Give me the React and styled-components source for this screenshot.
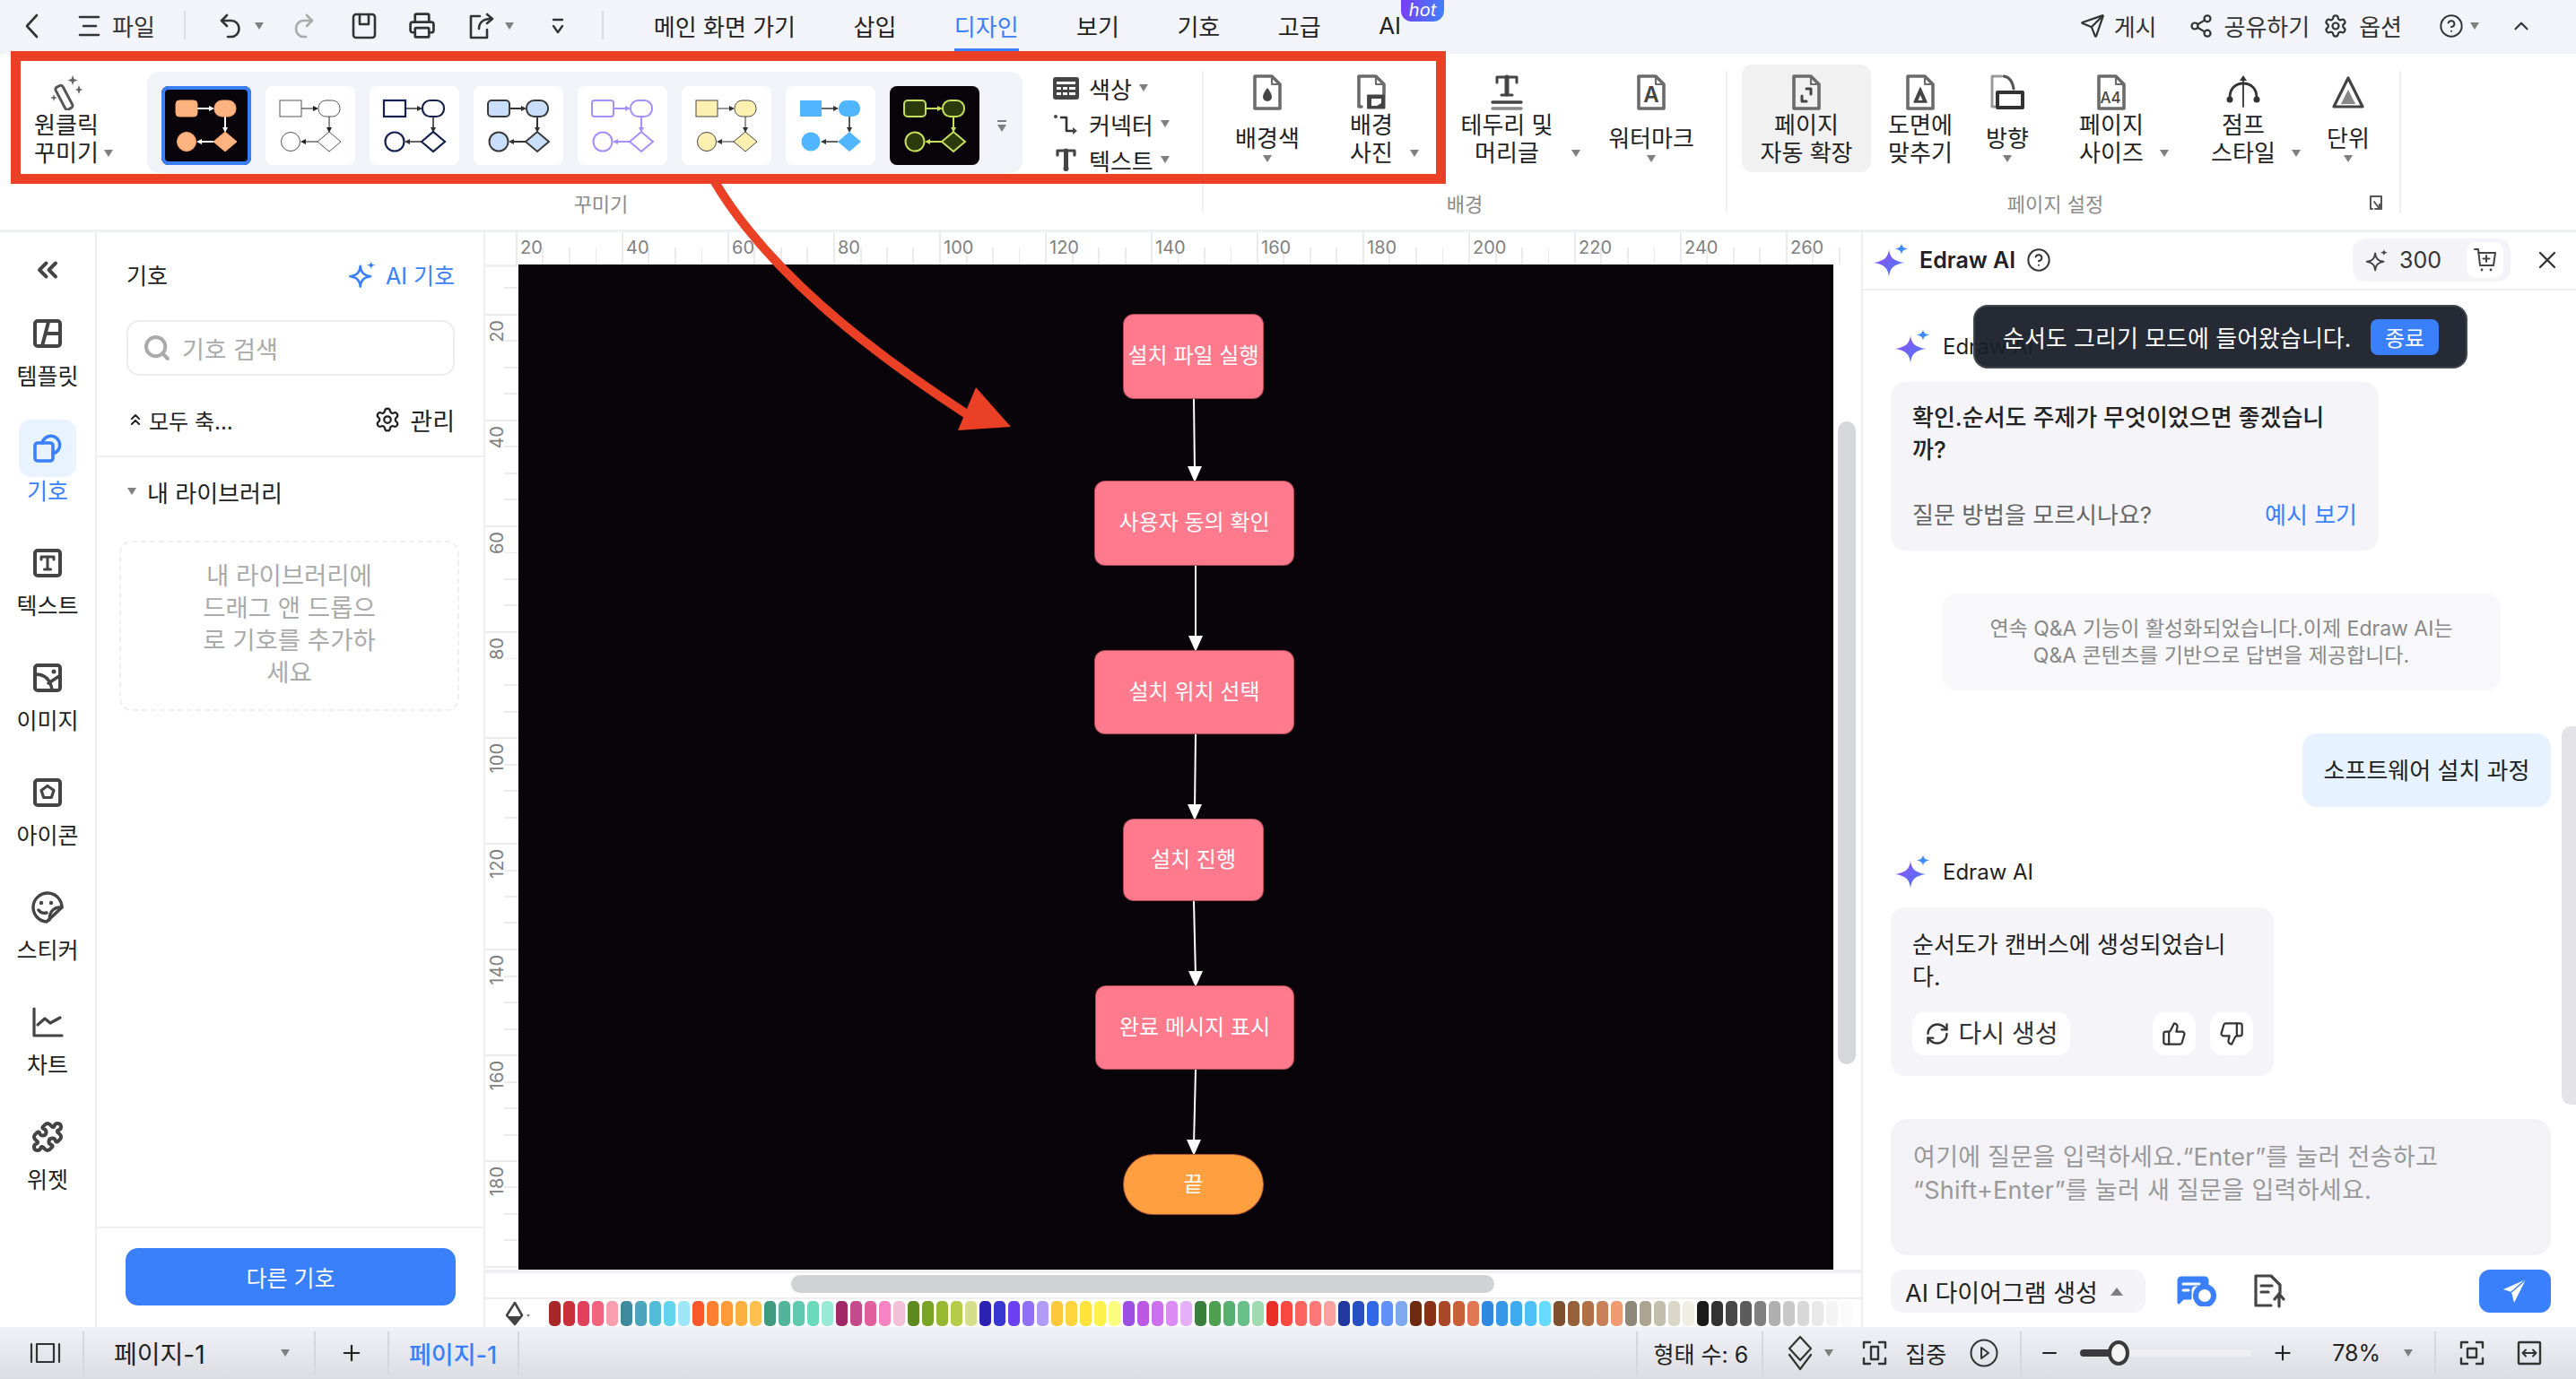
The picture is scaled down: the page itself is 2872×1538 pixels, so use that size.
import React from "react";
import styled, { createGlobalStyle } from "styled-components";
import { Printer, Send, Share2, Settings, ChevronUp, ChevronsLeft, ChevronsUp, CircleHelp, Plus, Minus, X, Search, ThumbsUp, ThumbsDown, RefreshCw, Puzzle } from "lucide-react";

const BLUE = "#3a7ffb";

const Global = createGlobalStyle`
  * { box-sizing: border-box; }
  html, body { margin: 0; padding: 0; width: 100%; height: 100%; overflow: hidden; background: #fff; }
  body { font-family: Inter, "Noto Sans CJK KR", sans-serif; color: #222; font-size: 26px; }
`;

const Page = styled.div`
  position: relative; width: 2872px; height: 1538px; overflow: hidden;
  display: grid; grid-template-rows: 60px 199px 1221px 58px;
`;

/* ---------- title bar ---------- */
const TitleBar = styled.header`
  display: flex; align-items: flex-start; background: #f2f4f9; height: 60px;
`;
const BarItem = styled.div`
  display: flex; align-items: center; height: 57px; margin-left: ${p => p.$ml || 0}px; flex: none;
  color: #333; white-space: nowrap;
`;
const BarSep = styled.div`
  flex: none; width: 2px; height: 32px; margin-top: 12px; margin-left: ${p => p.$ml || 0}px; background: #dcdde3;
`;
const Tabs = styled.nav`
  display: flex; gap: 64.5px; margin-left: 56px;
`;
const Tab = styled.div`
  position: relative; display: flex; align-items: center; height: 57px; white-space: nowrap;
  color: ${p => p.$on ? BLUE : "#222"}; border-bottom: 3px solid ${p => p.$on ? BLUE : "transparent"}; padding-top: 3px;
`;
const HotBadge = styled.span`
  position: absolute; left: 100%; top: 0; width: 48px; height: 24px; border-radius: 0 0 12px 12px;
  background: linear-gradient(100deg, #7a3cf5, #3f84fb); color: #fff; font-size: 20px; line-height: 22px; text-align: center; font-style: italic;
`;
const BarRight = styled.div`
  display: flex; margin-left: auto; padding-right: 48px;
`;
const Caret = styled.i`
  display: block; flex: none; width: 0; height: 0;
  border-left: 5px solid transparent; border-right: 5px solid transparent;
  border-top: 8px solid ${p => p.$c || "#7f7f7f"};
  margin-left: ${p => p.$ml || 0}px;
`;

/* ---------- ribbon ---------- */
const Ribbon = styled.section`
  display: flex; background: #fff; border-bottom: 3px solid #eff0f3; height: 199px;
`;
const Group = styled.div`
  flex: none; width: ${p => p.$w}px; display: flex; flex-direction: column; height: 196px;
`;
const ToolRow = styled.div`
  display: flex; height: 150px; padding-top: 12px; padding-left: ${p => p.$pl || 0}px;
`;
const GroupLabel = styled.div`
  display: grid; grid-template-columns: 1fr auto 1fr; align-items: center; height: 30px;
  font-size: 22px; color: #8b8b8b; padding-right: 18px;
  & > span { grid-column: 2; padding-left: ${p => p.$shift || 0}px; }
  & > svg { grid-column: 3; justify-self: end; }
`;
const Sep = styled.div`
  flex: none; width: 2px; height: 159px; margin-top: 19px; background: #f0f0f3;
`;
const Tool = styled.div`
  flex: none; width: ${p => p.$w}px; height: 120px; display: flex; flex-direction: column; align-items: center;
  padding-top: 12px; border-radius: 12px; background: ${p => p.$on ? "#f1f1f1" : "transparent"};
`;
const ToolIcon = styled.div`
  height: 38px; display: flex; align-items: center; justify-content: center;
`;
const ToolText = styled.div`
  height: 60px; margin-top: 3px; padding-top: ${p => p.$single ? 14 : 0}px; display: flex; flex-direction: column;
  align-items: center; justify-content: ${p => p.$single ? "flex-start" : "center"}; font-size: 26px; line-height: 31px;
`;
const ToolLine = styled.div`
  display: flex; align-items: center; justify-content: center; white-space: nowrap;
`;
const SideCaret = styled(Caret)`
  margin-left: ${p => p.$gap}px; margin-right: ${p => -(p.$gap + 10)}px;
`;
const UnderCaret = styled(Caret)`
  margin-top: 3px;
`;
const Gallery = styled.div`
  flex: none; width: 976px; height: 113px; margin: 8px 0 0 16px; padding: 16px 0 0 16px;
  display: flex; gap: 16px; background: #f2f3f8; border-radius: 14px;
`;
const Thumb = styled.div`
  flex: none; width: 100px; height: 88px; border-radius: 8px; overflow: hidden;
  background: ${p => p.$bg};
  outline: ${p => p.$sel ? `4px solid ${BLUE}` : "none"}; outline-offset: -4px;
  svg { display: block; }
`;
const GalleryMore = styled.div`
  flex: none; display: flex; flex-direction: column; align-items: center; gap: 3px; margin: 38px 0 0 4px;
  & > b { display: block; width: 10px; height: 2px; background: #7f7f7f; }
`;
const StyleList = styled.div`
  flex: none; display: flex; flex-direction: column; margin: 6px 0 0 34px;
`;
const StyleRow = styled.div`
  display: flex; align-items: center; height: 40px; white-space: nowrap;
  & > svg { flex: none; margin-right: 11px; }
  & > ${Caret} { margin-left: 8px; }
`;

/* ---------- main area ---------- */
const Main = styled.main`
  display: flex; height: 1221px; min-height: 0;
`;
const Rail = styled.aside`
  flex: none; width: 108px; border-right: 2px solid #efeff1; display: flex; flex-direction: column; align-items: center; padding-top: 30px;
`;
const Collapse = styled.div`
  height: 23px; margin-bottom: 28px; display: flex; align-items: center; justify-content: center; color: #444;
`;
const RailItem = styled.div`
  width: 100%; height: 128px; display: flex; flex-direction: column; align-items: center;
  color: ${p => p.$on ? BLUE : "#222"};
`;
const RailIcon = styled.div`
  width: 64px; height: 64px; border-radius: 14px; display: flex; align-items: center; justify-content: center;
  background: ${p => p.$on ? "#e9f3ff" : "transparent"};
`;
const RailLabel = styled.div`
  margin-top: 2px; font-size: 25px; line-height: 28px; white-space: nowrap;
`;

const Panel = styled.section`
  flex: none; width: 433px; border-right: 2px solid #efeff1; display: flex; flex-direction: column;
`;
const PanelTop = styled.div`
  padding: 29px 32px 22px 33px; border-bottom: 2px solid #f0f0f2;
`;
const SpreadRow = styled.div`
  display: flex; align-items: center; justify-content: space-between; height: 36px; margin-top: ${p => p.$mt || 0}px; white-space: nowrap;
  font-size: 25px;
`;
const AiLink = styled.div`
  display: flex; align-items: center; gap: 10px; color: ${BLUE};
`;
const InlineIcon = styled.div`
  display: flex; align-items: center; gap: ${p => p.$gap || 10}px; font-size: ${p => p.$fs || 25}px;
`;
const SearchBox = styled.div`
  display: flex; align-items: center; gap: 12px; height: 62px; margin-top: 33px; padding-left: 16px;
  border: 2px solid #ececee; border-radius: 14px; color: #aaa; font-size: 27px;
`;
const LibraryRow = styled.div`
  display: flex; align-items: center; height: 36px; margin: 20px 0 0 34px; gap: 12px; font-size: 26px; white-space: nowrap;
`;
const DropZone = styled.div`
  width: 379px; height: 190px; margin: 37px 0 0 25px; border: 2px dashed #efeff1; border-radius: 14px;
  display: flex; align-items: center; justify-content: center; text-align: center;
  color: #aaa; font-size: 27.5px; line-height: 36px; padding-bottom: 4px;
`;
const PanelFoot = styled.div`
  margin-top: auto; border-top: 2px solid #f0f0f2; padding: 22px 31px 24px 32px;
`;
const MoreBtn = styled.div`
  height: 64px; border-radius: 14px; background: ${BLUE}; color: #fff; font-size: 25px;
  display: flex; align-items: center; justify-content: center;
`;

const CanvasArea = styled.section`
  flex: none; width: 1534px; display: flex; flex-direction: column; overflow: hidden;
`;
const HRuler = styled.div`
  flex: none; height: 36px; display: flex; padding-left: 34px; background: #fff; overflow: hidden;
`;
const HCell = styled.div`
  flex: none; width: 118px; height: 36px; border-left: 2px solid #ebebed; padding: 0 0 0 3px;
  font-size: 20px; line-height: 34px; color: #808080;
  background: repeating-linear-gradient(90deg, transparent 0 27.5px, #ebebed 27.5px 29.5px) left bottom / 100% 19px no-repeat;
`;
const CanvasBody = styled.div`
  flex: none; height: 1121px; display: flex;
`;
const VRuler = styled.div`
  flex: none; width: 37px; display: flex; flex-direction: column; overflow: hidden; background: #fff; border-top: 3px solid #f0f0f2;
`;
const VCell = styled.div`
  flex: none; height: ${p => p.$h || 118}px; border-top: ${p => p.$h ? 0 : 2}px solid #ebebed; padding: 5px 0 0 3px;
  font-size: 20px; color: #808080;
  background: repeating-linear-gradient(0deg, transparent 0 27.5px, #ebebed 27.5px 29.5px) right top / 16px 100% no-repeat;
  & > span { display: block; writing-mode: vertical-rl; transform: rotate(180deg); line-height: 20px; }
`;
const Stage = styled.div`
  position: relative; flex: none; width: 1466px; background: #09030a; overflow: hidden;
`;
const Wires = styled.svg`
  position: absolute; inset: 0; width: 100%; height: 100%;
`;
const Node = styled.div`
  position: absolute; left: ${p => p.$x - 578}px; top: ${p => p.$y - 295}px; width: ${p => p.$w}px; height: ${p => p.$h}px;
  border-radius: ${p => p.$r}px; background: ${p => p.$bg}; border: 1px solid rgba(120,40,50,.6);
  display: flex; align-items: center; justify-content: center; color: #fff; font-size: 24px; padding-bottom: 6px; white-space: nowrap;
`;
const Gutter = styled.div`
  flex: 1; padding: 175px 0 0 5px;
`;
const VThumb = styled.div`
  width: 20px; height: 717px; border-radius: 10px; background: #d6d7da;
`;
const HScroll = styled.div`
  flex: none; height: 31px; border-top: 4px solid #f0f0f2; padding: 2px 0 0 341px;
`;
const HThumb = styled.div`
  width: 784px; height: 20px; border-radius: 10px; background: #d1d2d4;
`;
const Swatches = styled.div`
  flex: none; height: 33px; border-top: 2px solid #eee; display: flex; align-items: center; padding-left: 22px;
`;
const ChipRow = styled.div`
  display: flex; gap: 3px; margin-left: 17px;
`;
const Chip = styled.i`
  display: block; flex: none; width: 13px; height: 28px; border-radius: 5px; background: ${p => p.$c};
`;

/* ---------- chat ---------- */
const Chat = styled.aside`
  position: relative; flex: none; width: 797px; border-left: 2px solid #efeff1; display: flex; flex-direction: column;
`;
const ChatHead = styled.div`
  flex: none; height: 65px; padding: 0 16px 2px 12px; border-bottom: 2px solid #efeff1; display: flex; align-items: center;
`;
const ChatTitle = styled.div`
  margin: 0 12px 0 13px; font-size: 25px; font-weight: 600; white-space: nowrap;
`;
const Credits = styled.div`
  margin-left: auto; width: 176px; height: 48px; border-radius: 14px; background: #f3f3f8; display: flex; align-items: center; padding: 0 8px 0 14px;
  font-size: 25px; color: #333;
`;
const CreditNum = styled.span`
  margin-left: 12px;
`;
const CartBox = styled.div`
  margin-left: auto; width: 41px; height: 40px; background: #fff; border-radius: 10px; display: flex; align-items: center; justify-content: center;
`;
const CloseBox = styled.div`
  margin-left: 25px; display: flex; color: #333;
`;
const ChatBody = styled.div`
  flex: 1; display: flex; flex-direction: column; padding: 0 28px 0 31px; min-height: 0;
`;
const AgentRow = styled.div`
  flex: none; display: flex; align-items: center; gap: 15px; height: 38px; margin: ${p => p.$mt}px 0 0 5px; font-size: 24px; white-space: nowrap;
`;
const Bubble = styled.div`
  flex: none; width: ${p => p.$w}px; height: 188px; margin-top: 21px; padding: ${p => p.$strong ? 22 : 24}px 24px 0; border-radius: 16px; background: #f4f4f9;
  font-size: 26px; line-height: 36px; font-weight: ${p => p.$strong ? 500 : 400};
`;
const Hint = styled.div`
  display: flex; justify-content: space-between; margin-top: 37px; color: #666; font-size: 26px; line-height: 36px; font-weight: 400;
  & > b { font-weight: 400; color: ${BLUE}; }
`;
const Notice = styled.div`
  flex: none; width: 623px; height: 108px; margin: 48px 0 0 57px; border-radius: 16px; background: #f8f8fb; color: #888;
  font-size: 23px; line-height: 30px; text-align: center; padding-top: 24px; white-space: nowrap;
`;
const UserBubble = styled.div`
  flex: none; align-self: flex-end; width: 277px; height: 82px; margin-top: 48px; border-radius: 16px; background: #e6f2ff;
  display: flex; align-items: center; justify-content: center; font-size: 26px; white-space: nowrap; padding-bottom: 4px;
`;
const ActionRow = styled.div`
  display: flex; gap: 16px; margin-top: 21px;
`;
const Action = styled.div`
  flex: none; height: 48px; width: ${p => p.$w}px; border-radius: 14px; background: #fff; display: flex; align-items: center; justify-content: center; gap: 10px;
  margin-left: ${p => p.$ml || 0}px; color: #333; white-space: nowrap; font-size: 28px;
`;
const Prompt = styled.div`
  flex: none; height: 152px; margin-top: 48px; padding: 24px 25px; border-radius: 18px; background: #f2f2f7; color: #999; font-size: 27px; line-height: 37px;
  white-space: nowrap; letter-spacing: .3px;
`;
const PromptBar = styled.div`
  flex: none; display: flex; align-items: center; height: 48px; margin-top: 16px;
`;
const ModeSelect = styled.div`
  flex: none; width: 284px; height: 48px; border-radius: 14px; background: #f3f3f8; display: flex; align-items: center; padding-left: 16px; gap: 14px;
  font-size: 27px; white-space: nowrap;
`;
const UpCaret = styled.i`
  display: block; flex: none; width: 0; height: 0; border-left: 7px solid transparent; border-right: 7px solid transparent; border-bottom: 9px solid #7f7f7f;
`;
const SendBtn = styled.div`
  margin-left: auto; width: 80px; height: 48px; border-radius: 12px; background: ${BLUE}; display: flex; align-items: center; justify-content: center;
`;
const PromptIcon = styled.div`
  display: flex; margin-left: ${p => p.$ml}px;
`;
const ChatScroll = styled.div`
  position: absolute; left: 779px; top: 551px; width: 16px; height: 422px; border-radius: 10px 0 0 10px; background: #e3e3e8;
`;
const Toast = styled.div`
  position: absolute; left: 123px; top: 81px; width: 551px; height: 71px; padding: 0 30px 0 31px; border-radius: 16px; background: rgba(26,31,42,.95); border: 2px solid #43474f;
  color: #fff; display: flex; align-items: center; justify-content: space-between; white-space: nowrap; font-size: 26px;
`;
const ToastBtn = styled.div`
  width: 76px; height: 40px; border-radius: 8px; background: ${BLUE}; display: flex; align-items: center; justify-content: center; font-size: 24px;
`;

/* ---------- status bar ---------- */
const StatusBar = styled.footer`
  display: flex; align-items: center; height: 58px; padding-right: 38px; background: linear-gradient(180deg, #f1f2f7, #dcdde2);
`;
const StatusSep = styled.div`
  flex: none; width: 2px; height: 48px; background: #d6d7dc; margin-left: ${p => p.$ml || 0}px;
`;
const StatusCell = styled.div`
  flex: none; display: flex; align-items: center; width: ${p => p.$w ? p.$w + "px" : "auto"}; margin-left: ${p => p.$ml || 0}px; padding-left: ${p => p.$pl || 0}px;
  justify-content: ${p => p.$center ? "center" : "flex-start"};
  color: ${p => p.$c || "#222"}; font-weight: ${p => p.$bold ? 500 : 400}; white-space: nowrap; font-size: ${p => p.$fs || 25}px;
`;
const StatusFill = styled.div`flex: 1;`;
const SliderTrack = styled.div`
  position: relative; flex: none; width: 191px; height: 8px; margin-left: 22px; border-radius: 4px; background: #eeeef0;
`;
const SliderFill = styled.div`
  height: 8px; width: 42px; border-radius: 4px; background: #3a3a3a;
`;
const SliderKnob = styled.div`
  position: absolute; left: 31px; top: -10px; width: 24px; height: 28px; border-radius: 50%; background: #f5f5f5; border: 4px solid #3a3a3a;
`;

/* ---------- annotation overlays ---------- */
const RedFrame = styled.div`
  position: absolute; left: 12px; top: 57px; width: 1600px; height: 148px; border: 11px solid #ea4025; pointer-events: none;
`;
const RedArrow = styled.svg`
  position: absolute; left: 0; top: 0; width: 2872px; height: 1538px; pointer-events: none;
`;

/* ---------- drawings ---------- */
const Ic = ({ w, h, children, sw = 2.6, c = "#333", vb }) => (
  <svg width={w} height={h} viewBox={vb || `0 0 ${w} ${h}`} fill="none" stroke={c} strokeWidth={sw} strokeLinecap="round" strokeLinejoin="round">{children}</svg>
);

const Star = ({ id }) => (
  <svg width="38" height="38" viewBox="0 0 38 38">
    <defs><linearGradient id={id} x1="0" y1="0" x2="1" y2="1"><stop offset="0" stopColor="#9a4bf0" /><stop offset="1" stopColor="#3f7efb" /></linearGradient></defs>
    <path d="M17 7 C18 16 22 20 34 22 C22 24 18 28 17 38 C16 28 12 24 0 22 C12 20 16 16 17 7Z" fill={`url(#${id})`} />
    <path d="M31 0 C31.5 4 33 5.5 38 6.5 C33 7.5 31.5 9 31 13 C30.5 9 29 7.5 24 6.5 C29 5.5 30.5 4 31 0Z" fill="#3f8bfb" />
  </svg>
);

const Spark = ({ c = "#333", s = 28 }) => (
  <svg width={s} height={s} viewBox="0 0 28 28" fill="none" stroke={c} strokeWidth="2.2" strokeLinejoin="round">
    <path d="M12 6 C12.6 12 15 15 22 16 C15 17 12.6 20 12 26 C11.4 20 9 17 2 16 C9 15 11.4 12 12 6Z" />
    <path d="M22.5 1 C22.8 3.6 23.8 4.6 27 5 C23.8 5.4 22.8 6.4 22.5 9 C22.2 6.4 21.2 5.4 18 5 C21.2 4.6 22.2 3.6 22.5 1Z" fill={c} stroke="none" />
  </svg>
);

const Doc = ({ children, sw = 3.6, partial }) => (
  <svg width="34" height="40" viewBox="0 0 34 40" fill="none" stroke="#6b6b6b" strokeWidth={sw} strokeLinejoin="round" strokeLinecap="round">
    <path d={partial ? "M6 36H3V2h19l9 9v11" : "M3 2h19l9 9v27H3z"} />
    <path d="M22 2v9h9" strokeWidth="2.2" />
    {children}
  </svg>
);

const THEMES = [
  { bg: "#09030a", fill: "#ffb380", stroke: "#ffa566", sw: 1, line: "#fff", lw: 2, r: 4, sel: true },
  { bg: "#fff", fill: "#fff", stroke: "#555", sw: 1, line: "#222", lw: 1, r: 0 },
  { bg: "#fff", fill: "#fff", stroke: "#14204f", sw: 2.2, line: "#333", lw: 1.6, r: 0 },
  { bg: "#fff", fill: "#c9defb", stroke: "#3a3a3a", sw: 2, line: "#333", lw: 2, r: 4 },
  { bg: "#fff", fill: "#fff", stroke: "#a48ffb", sw: 2, line: "#a48ffb", lw: 2, r: 3 },
  { bg: "#fff", fill: "#fef0b0", stroke: "#444", sw: 1, line: "#333", lw: 1, r: 0 },
  { bg: "#fff", fill: "#4fb6ff", stroke: "#4fb6ff", sw: 0, line: "#333", lw: 1.6, r: 0 },
  { bg: "#09030a", fill: "#2c3a0c", stroke: "#c6e05e", sw: 2, line: "#c6e05e", lw: 2, r: 4 },
];

const StyleThumb = ({ t }) => {
  const s = { fill: t.fill, stroke: t.stroke, strokeWidth: t.sw };
  return (
    <Thumb $bg={t.bg} $sel={t.sel}>
      <svg width="100" height="88" viewBox="0 0 100 88">
        <path d="M40 25 H54" stroke={t.line} strokeWidth={t.lw} />
        <path d="M59 25 l-6 -3 v6z" fill={t.line} />
        <path d="M71 34 V47" stroke={t.line} strokeWidth={t.lw} />
        <path d="M71 52 l-3 -6 h6z" fill={t.line} />
        <path d="M58 62 H44" stroke={t.line} strokeWidth={t.lw} />
        <path d="M39 62 l6 -3 v6z" fill={t.line} />
        <rect x="16" y="16" width="24" height="18" rx={t.r} {...s} />
        <rect x="59" y="16" width="24" height="18" rx="8.5" {...s} />
        <ellipse cx="28" cy="62" rx="10.5" ry="10.5" {...s} />
        <path d="M58 62 L71 51 L84 62 L71 73Z" {...s} />
      </svg>
    </Thumb>
  );
};

const PALETTE = [
  "#a82828","#c8303c","#e0405a","#f2647e","#fb9eb0","#3d8a9e","#4ba6bd","#55bcd8","#62d4ee","#9ce8f8",
  "#f9582a","#ff8030","#ff9a38","#ffae40","#ffc050","#3f9a80","#52b49a","#60c8ae","#6cd8bc","#96ead6",
  "#a02868","#c44a8e","#e0609e","#f684c4","#f2c0d8","#5e8a20","#78a428","#96b832","#b4cc48","#d4de88",
  "#2a22b0","#3838d0","#6a40f0","#9070f4","#b09cf8","#ffc83c","#ffd43c","#ffe23c","#fff24c","#fcfc80",
  "#9a50e0","#bc58e4","#cc70f0","#dc8cf4","#e4b0f8","#38803c","#4ea050","#58b070","#68c088","#a0dcb0",
  "#e83028","#f84840","#fc6460","#ff7878","#fca0a0","#2038a0","#2850c0","#3068e8","#6090f8","#80a8f0",
  "#6e2a10","#883018","#a84828","#c86038","#e07858","#3088e0","#3898e8","#40aaf0","#50c0f8","#68dcff",
  "#7c5030","#96603c","#b07048","#c88058","#f09a70","#908878","#aca490","#c4beac","#dcd6c8","#f0ede2",
  "#1a1a1a","#333333","#484848","#5c5c5c","#808080","#b0b0b0","#c8c8c8","#d8d8d8","#e8e8e8","#f4f4f4","#fafafa",
];

const NODES = [
  { t: "설치 파일 실행", x: 1252, y: 350, w: 157, h: 95, r: 12, bg: "#ff7a8c" },
  { t: "사용자 동의 확인", x: 1220, y: 536, w: 223, h: 95, r: 12, bg: "#ff7a8c" },
  { t: "설치 위치 선택", x: 1220, y: 725, w: 223, h: 94, r: 12, bg: "#ff7a8c" },
  { t: "설치 진행", x: 1252, y: 913, w: 157, h: 92, r: 12, bg: "#ff7a8c" },
  { t: "완료 메시지 표시", x: 1221, y: 1099, w: 222, h: 94, r: 12, bg: "#ff7a8c" },
  { t: "끝", x: 1252, y: 1287, w: 157, h: 68, r: 34, bg: "#ff9f40" },
];
const WIRES = [[1331, 445, 1332, 536], [1333, 631, 1333, 725], [1333, 819, 1332, 913], [1331, 1005, 1333, 1099], [1333, 1193, 1331, 1287]];

const TOOLS_DESIGN = [
  { k: "색상", icon: <Ic w={29} h={25} sw={0}><rect width="29" height="25" rx="3" fill="#444" stroke="none" /><path d="M4 5h21v3H4zM4 11h5v3H4zM11 11h5v3h-5zM18 11h7v3h-7zM4 17h5v3H4zM11 17h5v3h-5zM18 17h7v3h-7z" fill="#fff" stroke="none" /></Ic> },
  { k: "커넥터", icon: <Ic w={29} h={25} sw={2.6}><circle cx="3" cy="4" r="2" fill="#444" stroke="none" /><path d="M9 5h6v15h6" /><path d="M22 16l5 4-5 4z" fill="#444" stroke="none" /></Ic> },
  { k: "텍스트", icon: <Ic w={29} h={28} sw={3.2} c="#444"><path d="M5 9V4h19v5" /><path d="M14.500 4v20" strokeWidth="5" /><circle cx="14.500" cy="24" r="3" fill="#444" stroke="none" /></Ic> },
];

const App = () => (
  <Page>
    <Global />
    <TitleBar>
      <BarItem $ml={27}><Ic w={17} h={28}><path d="M14 2 3 14l11 12" /></Ic></BarItem>
      <BarItem $ml={43}><Ic w={25} h={26}><path d="M2 3h21M6 13h14M2 23h21" /></Ic></BarItem>
      <BarItem $ml={13}>파일</BarItem>
      <BarSep $ml={32} />
      <BarItem $ml={38}><Ic w={24} h={30}><path d="M8 3 2 9l6 6" /><path d="M2 9h11a8.500 9 0 0 1 0 18H9" /></Ic><Caret $ml={15} /></BarItem>
      <BarItem $ml={34}><Ic w={22} h={30} c="#aaa"><path d="M14 3l6 6-6 6" /><path d="M20 9H10a8 9 0 0 0 0 18h3" /></Ic></BarItem>
      <BarItem $ml={42}><Ic w={28} h={30}><rect x="2" y="2" width="24" height="26" rx="3" /><path d="M9 2v11h10V2" /></Ic></BarItem>
      <BarItem $ml={35}><Printer size={31} strokeWidth={2.1} color="#333" /></BarItem>
      <BarItem $ml={36}><Ic w={30} h={30}><path d="M13 4H3v24h18v-9" /><path d="M12 18c0-7 5-11 13-11" /><path d="M21 2l6 5-6 5" /></Ic><Caret $ml={11} /></BarItem>
      <BarItem $ml={42}><Ic w={14} h={20} sw={2.4}><path d="M2 3h10" /><path d="M2 10l5 7 5-7" /></Ic></BarItem>
      <BarSep $ml={42} />
      <Tabs>
        <Tab>메인 화면 가기</Tab>
        <Tab>삽입</Tab>
        <Tab $on>디자인</Tab>
        <Tab>보기</Tab>
        <Tab>기호</Tab>
        <Tab>고급</Tab>
        <Tab>AI<HotBadge>hot</HotBadge></Tab>
      </Tabs>
      <BarRight>
        <BarItem><Send size={28} strokeWidth={1.9} color="#333" /></BarItem>
        <BarItem $ml={10}>게시</BarItem>
        <BarItem $ml={36}><Share2 size={28} strokeWidth={1.9} color="#333" /></BarItem>
        <BarItem $ml={11}>공유하기</BarItem>
        <BarItem $ml={15}><Settings size={28} strokeWidth={1.9} color="#333" /></BarItem>
        <BarItem $ml={12}>옵션</BarItem>
        <BarItem $ml={41}><CircleHelp size={28} strokeWidth={1.7} color="#333" /><Caret $ml={7} /></BarItem>
        <BarItem $ml={34}><ChevronUp size={26} strokeWidth={2} color="#333" /></BarItem>
      </BarRight>
    </TitleBar>

    <Ribbon>
      <Group $w={1340}>
        <ToolRow>
          <Tool $w={148}>
            <ToolIcon>
              <Ic w={36} h={40} sw={3} c="#555">
                <rect x="11" y="12" width="9" height="28" rx="3" transform="rotate(-28 15 26)" />
                <path d="M25 1l1.500 4 4 1.500-4 1.500-1.500 4-1.500-4-4-1.500 4-1.500zM32 12l1.500 4 3 1-3 1-1.500 4-1.500-4-3-1 3-1zM4 22l1 3 3 1-3 1-1 3-1-3-3-1 3-1z" fill="#666" stroke="none" />
              </Ic>
            </ToolIcon>
            <ToolText>
              <ToolLine>원클릭</ToolLine>
              <ToolLine>꾸미기<SideCaret $gap={6} /></ToolLine>
            </ToolText>
          </Tool>
          <Gallery>
            {THEMES.map((t, i) => <StyleThumb key={i} t={t} />)}
            <GalleryMore><b /><Caret /></GalleryMore>
          </Gallery>
          <StyleList>
            {TOOLS_DESIGN.map(d => <StyleRow key={d.k}>{d.icon}{d.k}<Caret /></StyleRow>)}
          </StyleList>
        </ToolRow>
        <GroupLabel $shift={18}><span>꾸미기</span></GroupLabel>
      </Group>
      <Sep />
      <Group $w={582}>
        <ToolRow>
          <Tool $w={142}>
            <ToolIcon><Doc><path d="M17 15c3 4 5 7 5 10a5 5 0 0 1-10 0c0-3 2-6 5-10z" fill="#444" stroke="none" /></Doc></ToolIcon>
            <ToolText $single><ToolLine>배경색</ToolLine><UnderCaret /></ToolText>
          </Tool>
          <Tool $w={90}>
            <ToolIcon><Doc partial><path d="M13 23h19v15H13z" fill="#444" stroke="#444" strokeWidth="1" /><path d="M17 27h11v5l-5 3h-6z" fill="#fff" stroke="none" /></Doc></ToolIcon>
            <ToolText><ToolLine>배경</ToolLine><ToolLine>사진<SideCaret $gap={19} /></ToolLine></ToolText>
          </Tool>
          <Tool $w={212}>
            <ToolIcon>
              <Ic w={36} h={40} sw={3} c="#444"><path d="M7 9V3h22v6" /><path d="M18 3v19" strokeWidth="5" /><path d="M12 23h12" /><path d="M2 31h32" strokeWidth="3.4" /><path d="M2 38h32" strokeWidth="3.4" stroke="#888" /></Ic>
            </ToolIcon>
            <ToolText><ToolLine>테두리 및</ToolLine><ToolLine>머리글<SideCaret $gap={36} /></ToolLine></ToolText>
          </Tool>
          <Tool $w={110}>
            <ToolIcon><Doc><text x="17" y="31" textAnchor="middle" fontSize="24" fontFamily="Inter" fill="#444" stroke="none" fontWeight="600">A</text></Doc></ToolIcon>
            <ToolText $single><ToolLine>워터마크</ToolLine><UnderCaret /></ToolText>
          </Tool>
        </ToolRow>
        <GroupLabel $shift={18}><span>배경</span></GroupLabel>
      </Group>
      <Sep />
      <Group $w={749}>
        <ToolRow $pl={16}>
          <Tool $w={144} $on>
            <ToolIcon><Doc><path d="M17 16h5v6M12 24v6h5" strokeWidth="3" stroke="#444" /></Doc></ToolIcon>
            <ToolText><ToolLine>페이지</ToolLine><ToolLine>자동 확장</ToolLine></ToolText>
          </Tool>
          <Tool $w={110}>
            <ToolIcon><Doc><path d="M17 15l7 16H10z" fill="#444" stroke="#444" strokeWidth="1.500" /><path d="M17 23l2.500 6h-5z" fill="#fff" stroke="none" /></Doc></ToolIcon>
            <ToolText><ToolLine>도면에</ToolLine><ToolLine>맞추기</ToolLine></ToolText>
          </Tool>
          <Tool $w={84}>
            <ToolIcon>
              <Ic w={40} h={40} sw={3} c="#555"><path d="M6 36H3V2h10" stroke="#999" /><path d="M16 2c6 1 10 6 11 14" /><rect x="9" y="20" width="28" height="17" fill="#fff" stroke="#333" strokeWidth="4" /></Ic>
            </ToolIcon>
            <ToolText $single><ToolLine>방향</ToolLine><UnderCaret /></ToolText>
          </Tool>
          <Tool $w={148}>
            <ToolIcon><Doc><text x="16" y="32" textAnchor="middle" fontSize="17" fontFamily="Inter" fill="#444" stroke="none" fontWeight="500">A4</text></Doc></ToolIcon>
            <ToolText><ToolLine>페이지</ToolLine><ToolLine>사이즈<SideCaret $gap={18} /></ToolLine></ToolText>
          </Tool>
          <Tool $w={146}>
            <ToolIcon>
              <Ic w={42} h={40} sw={2.8} c="#333"><path d="M6 26c0-10 6-16 15-16s15 6 15 16" /><path d="M21 3v33" strokeWidth="1.800" /><circle cx="6" cy="28" r="3.500" fill="#333" stroke="none" /><circle cx="36" cy="28" r="3.500" fill="#333" stroke="none" /><path d="M21 1l4 6H17z" fill="#333" stroke="none" /></Ic>
            </ToolIcon>
            <ToolText><ToolLine>점프</ToolLine><ToolLine>스타일<SideCaret $gap={18} /></ToolLine></ToolText>
          </Tool>
          <Tool $w={88}>
            <ToolIcon>
              <Ic w={38} h={38} sw={3.2} c="#444"><path d="M19 3 3 35h32z" /><path d="M19 16l8 16H11z" fill="#888" stroke="none" /></Ic>
            </ToolIcon>
            <ToolText $single><ToolLine>단위</ToolLine><UnderCaret /></ToolText>
          </Tool>
        </ToolRow>
        <GroupLabel>
          <span>페이지 설정</span>
          <Ic w={16} h={18} sw={2} c="#555"><path d="M4 16H2V2h12v14h-2" /><path d="M6 8l6 8M12 11v5H7" /></Ic>
        </GroupLabel>
      </Group>
      <Sep />
    </Ribbon>

    <Main>
      <Rail>
        <Collapse><ChevronsLeft size={36} strokeWidth={2.6} /></Collapse>
        <RailItem>
          <RailIcon><Ic w={32} h={32} sw={4} c="#444"><rect x="2" y="2" width="28" height="28" rx="3" /><path d="M17 3 10 30M14 16h15" /></Ic></RailIcon>
          <RailLabel>템플릿</RailLabel>
        </RailItem>
        <RailItem $on>
          <RailIcon $on><Ic w={32} h={32} sw={3.6} c={BLUE}><rect x="2" y="10" width="20" height="20" rx="3" /><path d="M10 10a10 10 0 1 1 12 12" /></Ic></RailIcon>
          <RailLabel>기호</RailLabel>
        </RailItem>
        <RailItem>
          <RailIcon><Ic w={32} h={32} sw={4} c="#444"><rect x="2" y="2" width="28" height="28" rx="3" /><path d="M9 12v-3h14v3M16 9v14M12.500 23h7" strokeWidth="3" /></Ic></RailIcon>
          <RailLabel>텍스트</RailLabel>
        </RailItem>
        <RailItem>
          <RailIcon><Ic w={32} h={32} sw={4} c="#444"><rect x="2" y="2" width="28" height="28" rx="3" /><path d="M3 12c10 0 16 6 18 17" strokeWidth="3.400" /><path d="M17 22l12-8" strokeWidth="3.400" /><circle cx="23" cy="9" r="2.500" fill="#444" stroke="none" /></Ic></RailIcon>
          <RailLabel>이미지</RailLabel>
        </RailItem>
        <RailItem>
          <RailIcon><Ic w={32} h={32} sw={4} c="#444"><rect x="2" y="2" width="28" height="28" rx="3" /><path d="M16 8.500l7 5-2.700 8h-8.600l-2.700-8z" strokeWidth="3.200" /></Ic></RailIcon>
          <RailLabel>아이콘</RailLabel>
        </RailItem>
        <RailItem>
          <RailIcon><Ic w={38} h={36} sw={3.4} c="#444"><path d="M18 34A16 16 0 1 1 35 18z" /><path d="M35 18c-8-1-14 4-14 14" /><circle cx="12" cy="13" r="2.200" fill="#444" stroke="none" /><circle cx="23" cy="13" r="2.200" fill="#444" stroke="none" /><path d="M9 21c2 3 5 4 9 3" /></Ic></RailIcon>
          <RailLabel>스티커</RailLabel>
        </RailItem>
        <RailItem>
          <RailIcon><Ic w={36} h={34} sw={3.2} c="#444"><path d="M3 2v30h31" /><path d="M7 20l8-7 6 5 11-6" /></Ic></RailIcon>
          <RailLabel>차트</RailLabel>
        </RailItem>
        <RailItem>
          <RailIcon><Puzzle size={36} strokeWidth={2.7} color="#444" /></RailIcon>
          <RailLabel>위젯</RailLabel>
        </RailItem>
      </Rail>

      <Panel>
        <PanelTop>
          <SpreadRow>기호<AiLink><Spark c={BLUE} s={32} />AI 기호</AiLink></SpreadRow>
          <SearchBox><Search size={32} strokeWidth={3} color="#aaa" />기호 검색</SearchBox>
          <SpreadRow $mt={31}>
            <InlineIcon $gap={5} $fs={24}><ChevronsUp size={20} strokeWidth={2.4} />모두 축...</InlineIcon>
            <InlineIcon $fs={27}><Settings size={30} strokeWidth={1.8} />관리</InlineIcon>
          </SpreadRow>
        </PanelTop>
        <LibraryRow><Caret />내 라이브러리</LibraryRow>
        <DropZone><div>내 라이브러리에<br />드래그 앤 드롭으<br />로 기호를 추가하<br />세요</div></DropZone>
        <PanelFoot><MoreBtn>다른 기호</MoreBtn></PanelFoot>
      </Panel>

      <CanvasArea>
        <HRuler>
          {Array.from({ length: 13 }, (_, i) => <HCell key={i}>{20 + i * 20}</HCell>)}
        </HRuler>
        <CanvasBody>
          <VRuler>
            <VCell $h={52} />
            {Array.from({ length: 9 }, (_, i) => <VCell key={i}><span>{20 + i * 20}</span></VCell>)}
            <VCell />
          </VRuler>
          <Stage>
            <Wires viewBox="578 295 1466 1121">
              {WIRES.map(([a, b, c, d], i) => (
                <g key={i}>
                  <path d={`M${a} ${b}L${c} ${d - 10}`} stroke="#fff" strokeWidth="2" />
                  <path d={`M${c} ${d + 2}l-8 -18h16z`} fill="#fff" />
                </g>
              ))}
            </Wires>
            {NODES.map(n => <Node key={n.t} $x={n.x} $y={n.y} $w={n.w} $h={n.h} $r={n.r} $bg={n.bg}>{n.t}</Node>)}
          </Stage>
          <Gutter><VThumb /></Gutter>
        </CanvasBody>
        <HScroll><HThumb /></HScroll>
        <Swatches>
          <Ic w={32} h={28} sw={2.6} c="#444"><path d="M11 2 2 16l9 10 8-10z" /><path d="M3 17h16l-8 9z" fill="#444" stroke="none" /><path d="M24 15l4 0-2 3z" fill="#7f7f7f" stroke="none" /></Ic>
          <ChipRow>{PALETTE.map((c, i) => <Chip key={i} $c={c} />)}</ChipRow>
        </Swatches>
      </CanvasArea>

      <Chat>
        <ChatHead>
          <Star id="s0" />
          <ChatTitle>Edraw AI</ChatTitle>
          <CircleHelp size={28} strokeWidth={1.7} color="#333" />
          <Credits>
            <Spark c="#444" s={26} />
            <CreditNum>300</CreditNum>
            <CartBox>
              <Ic w={28} h={28} sw={2} c="#444"><path d="M2 2h4l2 18h15l2-14H6" /><path d="M15 9v7M11.500 12.500h7" /><circle cx="10" cy="25" r="1.400" fill="#444" stroke="none" /><circle cx="20" cy="25" r="1.400" fill="#444" stroke="none" /></Ic>
            </CartBox>
          </Credits>
          <CloseBox><X size={32} strokeWidth={1.8} /></CloseBox>
        </ChatHead>
        <ChatBody>
          <AgentRow $mt={43}><Star id="s1" />Edraw AI</AgentRow>
          <Bubble $w={544} $strong>
            확인.순서도 주제가 무엇이었으면 좋겠습니<br />까?
            <Hint>질문 방법을 모르시나요?<b>예시 보기</b></Hint>
          </Bubble>
          <Notice>연속 Q&amp;A 기능이 활성화되었습니다.이제 Edraw AI는<br />Q&amp;A 콘텐츠를 기반으로 답변을 제공합니다.</Notice>
          <UserBubble>소프트웨어 설치 과정</UserBubble>
          <AgentRow $mt={53}><Star id="s2" />Edraw AI</AgentRow>
          <Bubble $w={427}>
            순서도가 캔버스에 생성되었습니<br />다.
            <ActionRow>
              <Action $w={176}><RefreshCw size={28} strokeWidth={2} />다시 생성</Action>
              <Action $w={48} $ml={76}><ThumbsUp size={28} strokeWidth={1.9} /></Action>
              <Action $w={48}><ThumbsDown size={28} strokeWidth={1.9} /></Action>
            </ActionRow>
          </Bubble>
          <Prompt>여기에 질문을 입력하세요.“Enter”를 눌러 전송하고<br />“Shift+Enter”를 눌러 새 질문을 입력하세요.</Prompt>
          <PromptBar>
            <ModeSelect>AI 다이어그램 생성<UpCaret /></ModeSelect>
            <PromptIcon $ml={34}>
              <Ic w={46} h={34} sw={3} c={BLUE}><path d="M3 30V5a3 3 0 0 1 3-3h26a3 3 0 0 1 3 3v5H22a6 6 0 0 0-6 6v9H8z" fill={BLUE} stroke={BLUE} /><path d="M8 9h18M8 16h6" stroke="#fff" /><circle cx="32" cy="22" r="10" fill="#fff" strokeWidth="6" /></Ic>
            </PromptIcon>
            <PromptIcon $ml={40}>
              <Ic w={36} h={38} sw={3.2} c="#444"><path d="M20 35H3V2h17l10 10v9" /><path d="M9 13h12M9 20h8" /><path d="M29 36V24M24 28l5-6 5 6" /></Ic>
            </PromptIcon>
            <SendBtn><svg width="30" height="30" viewBox="0 0 30 30"><path d="M27 2 2 13l9 3 3 12z" fill="#fff" /><path d="M27 2 11 16" stroke={BLUE} strokeWidth="1.500" /></svg></SendBtn>
          </PromptBar>
        </ChatBody>
        <ChatScroll />
        <Toast>순서도 그리기 모드에 들어왔습니다.<ToastBtn>종료</ToastBtn></Toast>
      </Chat>
    </Main>

    <StatusBar>
      <StatusCell $ml={33}><Ic w={35} h={26} sw={2.2} c="#333"><path d="M2 3v20M33 3v20" /><rect x="8" y="3" width="19" height="20" /></Ic></StatusCell>
      <StatusSep $ml={24} />
      <StatusCell $w={256} $pl={33} $fs={28}>페이지-1<Caret $ml={84} /></StatusCell>
      <StatusSep />
      <StatusCell $w={80} $center><Plus size={28} strokeWidth={1.9} /></StatusCell>
      <StatusSep />
      <StatusCell $w={143} $pl={22} $c={BLUE} $bold $fs={27}>페이지-1</StatusCell>
      <StatusSep />
      <StatusFill />
      <StatusSep />
      <StatusCell $ml={17}>형태 수: 6</StatusCell>
      <StatusSep $ml={15} />
      <StatusCell $ml={22}><Ic w={38} h={42} sw={2.2} c="#333"><path d="M19 3 7 16l12 13 12-13z" /><path d="M7 23l12 16 12-16" /></Ic><Caret $ml={8} /></StatusCell>
      <StatusCell $ml={32}><Ic w={28} h={30} sw={2.4} c="#333"><path d="M2 9V3h7M19 3h7v6M2 21v6h7M19 27h7v-6" /><rect x="10" y="8" width="8" height="14" /></Ic></StatusCell>
      <StatusCell $ml={20}>집중</StatusCell>
      <StatusCell $ml={26}><Ic w={32} h={32} sw={2} c="#333"><circle cx="16" cy="16" r="14.500" /><path d="M13 10l8 6-8 6z" /></Ic></StatusCell>
      <StatusSep $ml={24} />
      <StatusCell $ml={19}><Minus size={24} strokeWidth={2} /></StatusCell>
      <SliderTrack><SliderFill /><SliderKnob /></SliderTrack>
      <StatusCell $ml={22}><Plus size={26} strokeWidth={1.9} /></StatusCell>
      <StatusCell $ml={42}>78%</StatusCell>
      <Caret $ml={26} />
      <StatusSep $ml={24} />
      <StatusCell $ml={26}><Ic w={28} h={28} sw={2.4} c="#333"><path d="M2 8V2h7M19 2h7v6M2 20v6h7M19 26h7v-6" /><rect x="9" y="9" width="10" height="10" /></Ic></StatusCell>
      <StatusCell $ml={36}><Ic w={28} h={28} sw={2.4} c="#333"><rect x="2" y="2" width="24" height="24" rx="1" /><path d="M7 14h14M10 10.500 6.500 14l3.500 3.500M18 10.500l3.500 3.500-3.500 3.500" strokeWidth="2" /></Ic></StatusCell>
    </StatusBar>

    <RedFrame />
    <RedArrow viewBox="0 0 2872 1538">
      <path d="M797 203C855 300 960 385 1078 462" fill="none" stroke="#ea4025" strokeWidth="10" />
      <path d="M1088 432 1127 476 1068 480z" fill="#ea4025" />
    </RedArrow>
  </Page>
);

export default App;
